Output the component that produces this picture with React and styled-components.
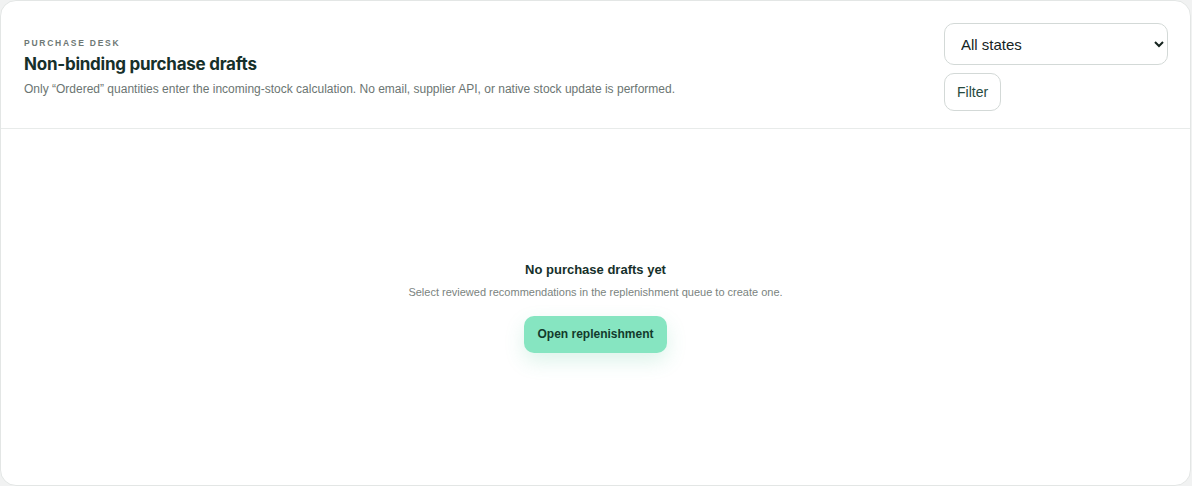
import styled, { createGlobalStyle } from "styled-components";

const GlobalStyle = createGlobalStyle`
  html, body {
    margin: 0;
    padding: 0;
    background: #f1f2f2;
  }
  body {
    font-family: "Liberation Sans", Arial, sans-serif;
  }
  * {
    box-sizing: border-box;
  }
`;

const App = () => {
  return (
    <>
      <GlobalStyle />
      <Panel>
        <PanelHeader>
          <HeaderText>
            <Eyebrow>Purchase desk</Eyebrow>
            <Title>Non-binding purchase drafts</Title>
            <Description>
              Only “Ordered” quantities enter the incoming-stock calculation. No
              email, supplier API, or native stock update is performed.
            </Description>
          </HeaderText>

          <Controls>
            <StateSelect defaultValue="all">
              <option value="all">All states</option>
              <option value="draft">Draft</option>
              <option value="ordered">Ordered</option>
            </StateSelect>
            <GhostButton>Filter</GhostButton>
          </Controls>
        </PanelHeader>

        <EmptyState>
          <EmptyTitle>No purchase drafts yet</EmptyTitle>
          <EmptyText>
            Select reviewed recommendations in the replenishment queue to create
            one.
          </EmptyText>
          <PrimaryButton>Open replenishment</PrimaryButton>
        </EmptyState>
      </Panel>
    </>
  );
};

const Panel = styled.div`
  width: 1191px;
  height: 486px;
  background: #fff;
  border: 1px solid #e3e6e5;
  border-radius: 16px;
  display: flex;
  flex-direction: column;
  overflow: hidden;
`;

const PanelHeader = styled.div`
  display: flex;
  align-items: center;
  justify-content: space-between;
  padding: 22px 22px 17px 23px;
  border-bottom: 1px solid #e8ebea;
`;

const HeaderText = styled.div`
  display: flex;
  flex-direction: column;
`;

const Eyebrow = styled.div`
  font-size: 8.5px;
  font-weight: 700;
  letter-spacing: 1.75px;
  text-transform: uppercase;
  color: #6e7875;
  line-height: 12px;
  margin-top: -1px;
`;

const Title = styled.h2`
  margin: 4px 0 0;
  font-family: Inter, "Liberation Sans", sans-serif;
  font-size: 17px;
  font-weight: 700;
  color: #16302a;
  line-height: 22px;
  letter-spacing: -0.25px;
`;

const Description = styled.p`
  margin: 6px 0 0;
  font-size: 12px;
  color: #6b7572;
  line-height: 16px;
`;

const Controls = styled.div`
  width: 224px;
  display: flex;
  flex-direction: column;
  align-items: flex-start;
  gap: 8px;
`;

const StateSelect = styled.select`
  width: 224px;
  height: 42px;
  padding: 0 12px;
  font-family: "Liberation Sans", Arial, sans-serif;
  font-size: 15px;
  color: #16241f;
  background: #fff;
  border: 1px solid #d3d9d7;
  border-radius: 10px;
`;

const GhostButton = styled.button`
  height: 38px;
  padding: 0 12px;
  font-family: "Liberation Sans", Arial, sans-serif;
  font-size: 14px;
  color: #274a3e;
  background: #fff;
  border: 1px solid #d3d9d7;
  border-radius: 10px;
  cursor: pointer;
`;

const EmptyState = styled.div`
  flex: 1;
  display: flex;
  flex-direction: column;
  align-items: center;
  justify-content: center;
`;

const EmptyTitle = styled.div`
  font-size: 13px;
  font-weight: 700;
  color: #16302a;
  line-height: 16px;
`;

const EmptyText = styled.div`
  margin-top: 7px;
  font-size: 11px;
  color: #7a8380;
  line-height: 14px;
`;

const PrimaryButton = styled.button`
  margin-top: 17px;
  height: 37px;
  padding: 0 13px;
  font-family: "Liberation Sans", Arial, sans-serif;
  font-size: 12px;
  font-weight: 700;
  color: #133a2c;
  background: #86e5c1;
  border: none;
  border-radius: 10px;
  box-shadow: 0 8px 20px rgba(60, 190, 140, 0.18);
  cursor: pointer;
`;

export default App;
